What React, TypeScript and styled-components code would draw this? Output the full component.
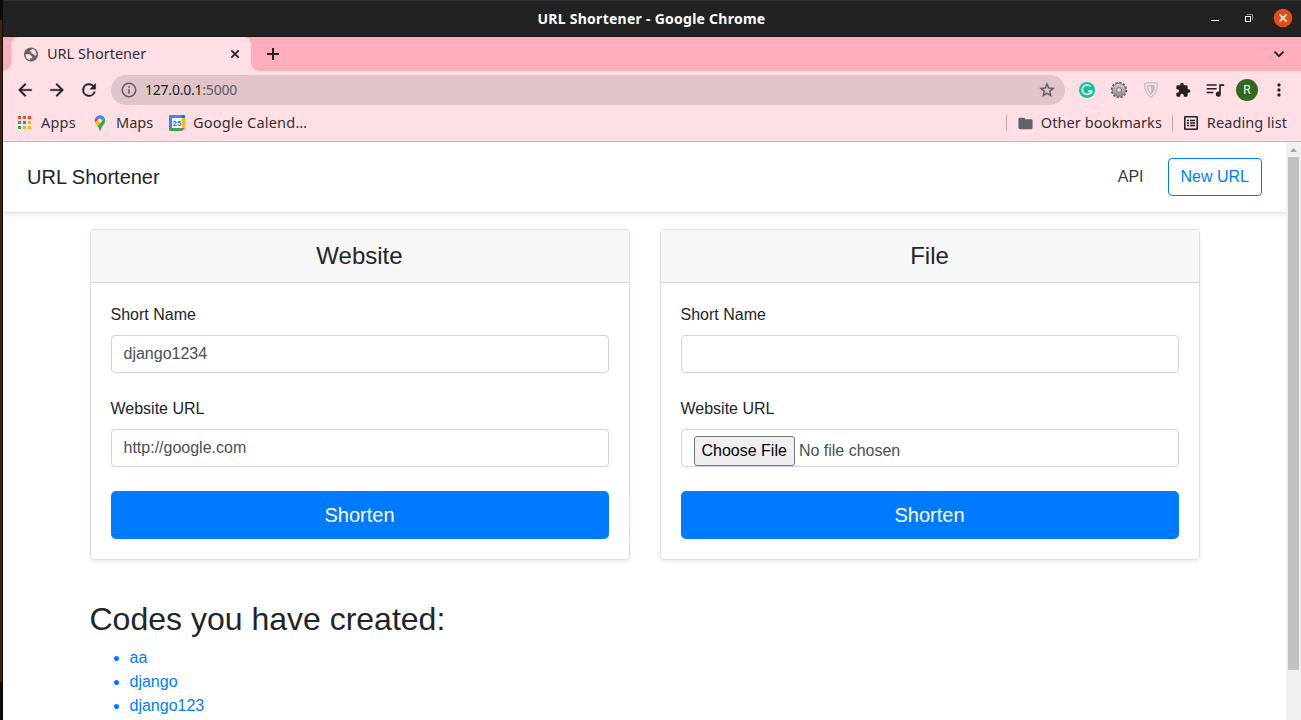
import React from 'react';
import styled, { createGlobalStyle } from 'styled-components';

const Global = createGlobalStyle`
  *, *::before, *::after { box-sizing: border-box; }
  html, body { margin: 0; padding: 0; overflow: hidden; }
  body { background: #fff; }
`;

const uiFont = `'Noto Sans', 'Open Sans', sans-serif`;
const pageFont = `'Liberation Sans', Arial, sans-serif`;

const Screen = styled.div`
  display: flex;
  width: 1301px;
  height: 720px;
  overflow: hidden;
  background: #fff;
`;
const DesktopEdge = styled.div`
  flex: none;
  width: 3px;
  height: 720px;
  border-right: 1px solid #050505;
  background: linear-gradient(#0c0c0c 0 20px, #4c2100 20px 682px, #0c0c0c 682px);
`;
const Window = styled.div`
  flex: 1;
  min-width: 0;
  display: flex;
  flex-direction: column;
`;

const UiText = styled.span<{ $size?: number; $track?: number; $bold?: boolean; $color?: string }>`
  font-family: ${uiFont};
  font-size: ${p => p.$size ?? 14.5}px;
  letter-spacing: ${p => p.$track ?? 0}px;
  font-weight: ${p => (p.$bold ? 700 : 400)};
  color: ${p => p.$color ?? '#313131'};
  line-height: 20px;
  white-space: nowrap;
`;

const TitleBar = styled.div`
  flex: none;
  display: grid;
  grid-template-columns: 1fr auto 1fr;
  align-items: center;
  height: 37px;
  padding: 0 6px 0 5px;
  background: #222;
  border-top: 1px solid #333;
  border-bottom: 1px solid #1a1a1a;
`;
const TitleCell = styled.div`
  grid-column: 2;
  display: flex;
`;
const WindowButtons = styled.div`
  display: flex;
  justify-content: flex-end;
  align-items: center;
  height: 21px;
  padding-bottom: 1px;
`;
const TabStrip = styled.div`
  flex: none;
  display: flex;
  align-items: stretch;
  height: 34px;
  background: #ffadbc;
`;
const TabCurve = styled.div<{ $side: 'left' | 'right' }>`
  align-self: flex-end;
  width: 8px;
  height: 8px;
  background: radial-gradient(circle at ${p => (p.$side === 'left' ? '0 0' : '100% 0')}, #ffadbc 7.5px, #ffdfe6 8px);
`;
const Tab = styled.div`
  display: flex;
  align-items: center;
  width: 240px;
  padding: 0 10px 0 12px;
  border-radius: 8px 8px 0 0;
  background: #ffdfe6;
`;
const TabTitle = styled.div`
  flex: 1;
  display: flex;
  padding: 0 0 2px 7px;
`;
const NewTab = styled.div`
  display: flex;
  flex: 1;
  align-items: center;
  padding-left: 5px;
`;
const TabSearch = styled.div`
  display: flex;
  align-items: center;
  padding-right: 15px;
`;
const Toolbar = styled.div`
  flex: none;
  display: flex;
  align-items: center;
  height: 38px;
  padding-left: 12px;
  background: #ffdfe6;
`;
const NavButtons = styled.div`
  flex: none;
  display: flex;
  gap: 12px;
  width: 96px;
`;
const Omnibox = styled.div`
  flex: none;
  display: flex;
  align-items: center;
  width: 954px;
  height: 30px;
  padding: 0 9px;
  border-radius: 15px;
  background: #e0c4ca;
`;
const Address = styled.div`
  flex: 1;
  display: flex;
  padding-left: 7px;
`;
const Extensions = styled.div`
  flex: none;
  display: grid;
  grid-template-columns: repeat(7, 32px);
  justify-items: center;
  align-items: center;
  padding-left: 6px;
`;
const Avatar = styled.div`
  display: grid;
  place-items: center;
  width: 22px;
  height: 22px;
  border-radius: 50%;
  background: #33691e;
  color: #fff;
  font: 12px/22px Roboto, sans-serif;
`;
const Bookmarks = styled.div`
  flex: none;
  display: flex;
  align-items: center;
  height: 33px;
  padding: 0 14px 4px 11px;
  background: #ffdfe6;
  border-bottom: 1px solid #ceb4ba;
`;
const Bookmark = styled.div<{ $width?: number; $gap?: number }>`
  display: flex;
  align-items: center;
  gap: ${p => p.$gap ?? 8}px;
  width: ${p => (p.$width ? `${p.$width}px` : 'auto')};
`;
const BookmarkLabel = styled(UiText)`
  padding-bottom: 2px;
`;
const Spacer = styled.div`
  flex: 1;
`;
const Divider = styled.div<{ $after: number }>`
  width: 1px;
  height: 16px;
  margin-right: ${p => p.$after}px;
  background: #c0a8ad;
`;

const Viewport = styled.div`
  flex: 1;
  min-height: 0;
  display: flex;
  overflow: hidden;
`;
const Page = styled.div`
  flex: 1;
  height: 578px;
  overflow: hidden;
  background: #fff;
  color: #212529;
  font-family: ${pageFont};
  font-size: 16px;
  line-height: 24px;
`;
const ScrollTrack = styled.div`
  flex: none;
  display: flex;
  flex-direction: column;
  align-items: center;
  width: 15px;
  height: 578px;
  background: #f0f0f0;
`;
const ScrollThumb = styled.div`
  width: 11px;
  height: 513px;
  background: #c1c1c1;
`;
const NavBar = styled.header`
  display: flex;
  align-items: center;
  height: 71px;
  padding: 16px 24px;
  border-bottom: 1px solid #dee2e6;
  box-shadow: 0 2px 4px rgba(0, 0, 0, 0.075);
`;
const Brand = styled.h5`
  margin: 0 auto 0 0;
  font-size: 20px;
  font-weight: 400;
  line-height: 24px;
`;
const NavLink = styled.a`
  margin-right: 16px;
  padding: 8px;
  color: #343a40;
`;
const OutlineButton = styled.a`
  padding: 6px 12px;
  border: 1px solid #007bff;
  border-radius: 4px;
  color: #007bff;
`;
const Container = styled.main`
  width: 1140px;
  margin: 0 auto;
  padding: 16px 15px 0;
`;
const CardDeck = styled.div`
  display: flex;
  gap: 30px;
`;
const Card = styled.section`
  flex: 1;
  border: 1px solid #dfdfdf;
  border-radius: 4px;
  box-shadow: 0 2px 4px rgba(0, 0, 0, 0.075);
`;
const CardHeader = styled.div`
  padding: 12px 20px;
  border-bottom: 1px solid #d8d8d8;
  border-radius: 3px 3px 0 0;
  background: #f7f7f7;
  text-align: center;
`;
const CardTitle = styled.h4`
  margin: 0;
  font-size: 24px;
  font-weight: 400;
  line-height: 28px;
`;
const CardBody = styled.div`
  padding: 20px;
`;
const Field = styled.div`
  margin-bottom: 24px;
`;
const Label = styled.label`
  display: block;
  margin-bottom: 8px;
`;
const Input = styled.input`
  display: block;
  width: 100%;
  height: 38px;
  padding: 6px 12px;
  border: 1px solid #ced4da;
  border-radius: 4px;
  background: #fff;
  color: #495057;
  font: 16px/24px ${pageFont};
`;
const FileInput = styled.div`
  display: flex;
  align-items: flex-start;
  gap: 4px;
  height: 38px;
  padding: 6px 12px 0;
  border: 1px solid #ced4da;
  border-radius: 4px;
  color: #495057;
  line-height: 30px;
`;
const FileButton = styled.span`
  height: 30px;
  padding: 0 7px;
  border: 1px solid #767676;
  border-radius: 3px;
  background: #efefef;
  color: #000;
  line-height: 28px;
`;
const Submit = styled.button`
  display: block;
  width: 100%;
  height: 48px;
  padding: 0;
  border: 0;
  border-radius: 5px;
  background: #007bff;
  color: #fff;
  font: 20px/30px ${pageFont};
`;
const SectionTitle = styled.h2`
  margin: 40px 0 8px;
  font-size: 32px;
  font-weight: 400;
  line-height: 38px;
`;
const CodeList = styled.ul`
  margin: 0;
  padding-left: 40px;
  color: #007bff;
`;

const Icon = ({ d, size = 20, color = '#202124', weight = 0 }: { d: string; size?: number; color?: string; weight?: number }) => (
  <svg width={size} height={size} viewBox="0 0 24 24" fill={color} stroke={color} strokeWidth={weight}><path d={d} /></svg>
);

const icons = {
  back: 'M20 11H7.83l5.59-5.59L12 4l-8 8 8 8 1.41-1.41L7.83 13H20z',
  forward: 'M12 4l-1.41 1.41L16.17 11H4v2h12.17l-5.58 5.59L12 20l8-8z',
  reload: 'M17.65 6.35A7.96 7.96 0 0 0 12 4a8 8 0 1 0 7.73 10h-2.08A6 6 0 1 1 12 6c1.66 0 3.14.69 4.22 1.78L13 11h7V4z',
  info: 'M11 7h2v2h-2zm0 4h2v6h-2zm1-9a10 10 0 1 0 0 20 10 10 0 0 0 0-20zm0 18a8 8 0 1 1 0-16 8 8 0 0 1 0 16z',
  star: 'M22 9.24l-7.19-.62L12 2 9.19 8.63 2 9.24l5.46 4.73L5.82 21 12 17.27 18.18 21l-1.63-7.03zM12 15.4l-3.76 2.27 1-4.28-3.32-2.88 4.38-.38L12 6.1l1.71 4.04 4.38.38-3.32 2.88 1 4.28z',
  puzzle: 'M20.5 11H19V7a2 2 0 0 0-2-2h-4V3.5a2.5 2.5 0 0 0-5 0V5H4a2 2 0 0 0-2 2v3.8h1.5a2.7 2.7 0 0 1 0 5.4H2V20a2 2 0 0 0 2 2h3.8v-1.5a2.7 2.7 0 0 1 5.4 0V22H17a2 2 0 0 0 2-2v-4h1.5a2.5 2.5 0 0 0 0-5z',
  queue: 'M2 5h12v2H2zm0 4.5h12v2H2zm0 4.5h8v2H2zM17 5h6v2.2h-4V17a3 3 0 1 1-2-2.83z',
  dots: 'M12 8a2 2 0 1 0 0-4 2 2 0 0 0 0 4zm0 2a2 2 0 1 0 0 4 2 2 0 0 0 0-4zm0 6a2 2 0 1 0 0 4 2 2 0 0 0 0-4z',
  folder: 'M10 4H4a2 2 0 0 0-2 2v12a2 2 0 0 0 2 2h16a2 2 0 0 0 2-2V8a2 2 0 0 0-2-2h-8z',
};

const WindowControls = () => (
  <svg width="92" height="20" viewBox="0 0 92 20" fill="none">
    <path d="M8 12.5h8" stroke="#fff" />
    <path d="M44 6.5h5.5v5.5" stroke="#8b8b8b" />
    <rect x="42.5" y="8.5" width="5" height="5" stroke="#fff" />
    <circle cx="80" cy="10" r="9.3" fill="#e24e1b" />
    <path d="M76.5 6.5l7 7m0-7l-7 7" stroke="#fff" strokeWidth="1.6" />
  </svg>
);

const GlobeIcon = () => (
  <svg width="17" height="17" viewBox="0 0 17 17">
    <circle cx="8" cy="8.5" r="7" fill="#5f6368" />
    <path d="M2.5 8.2h3.8c1.7 0 1.5 2.3 3 2.3v1.8H7.1v1.9C4.2 13.8 2.4 11.4 2.5 8.2z" fill="#ffdfe6" />
    <path d="M9.2 2.8c2.7.6 4.5 3 4.3 5.9-1 1.5-2.2.9-2.5 0-.5-1.2-2.7-.5-2.7-2V5.5h-1.8c0-1.5 1.9-1 2.7-2.7z" fill="#ffdfe6" />
  </svg>
);

const AppsIcon = () => (
  <svg width="20" height="20" viewBox="0 0 20 20">
    {['#f44336', '#f44336', '#f44336', '#34a853', '#1e88e5', '#fbb905', '#34a853', '#fbb905', '#fbb905'].map((c, i) => (
      <rect key={i} x={4 + (i % 3) * 5} y={3 + Math.floor(i / 3) * 5} width="3" height="3" fill={c} />
    ))}
  </svg>
);

const MapsIcon = () => (
  <svg width="16" height="16" viewBox="0 0 16 16">
    <path d="M3.9 2.2A5.2 5.2 0 0 0 3.2 7.7L6.5 5z" fill="#ea4335" />
    <path d="M3.7 2.4A5.3 5.3 0 0 1 12.6 2.9L9.3 6.6 6.5 5z" fill="#4285f4" />
    <path d="M12.6 2.9c1.4 2.8.3 5.2-1.3 7.2C10 11.7 9.4 13 8.8 15c-.2.7-1.2.7-1.4 0-.5-1.7-1-2.9-1.8-4z" fill="#34a853" />
    <path d="M3.2 7.7C3.7 8.9 4.7 10 5.7 11.2L9.6 6.5 6.4 4.2z" fill="#fbbc04" />
    <circle cx="8" cy="5.4" r="2" fill="#ffdfe6" />
  </svg>
);

const CalendarIcon = () => (
  <svg width="16" height="16" viewBox="0 0 16 16">
    <path d="M0 1a1 1 0 0 1 1-1h12v3H3v10H0z" fill="#4285f4" />
    <path d="M13 0h2a1 1 0 0 1 1 1v2h-3z" fill="#1967d2" />
    <path d="M13 3h3v10h-3z" fill="#fbbc04" />
    <path d="M0 13h13v3H1a1 1 0 0 1-1-1z" fill="#34a853" />
    <path d="M13 13h3l-3 3z" fill="#ea4335" />
    <path d="M3 3h10v10H3z" fill="#fff" />
    <text x="8" y="11" textAnchor="middle" fontFamily="Roboto, sans-serif" fontWeight="700" fontSize="8" fill="#1a73e8">25</text>
  </svg>
);

const GrammarlyIcon = () => (
  <svg width="20" height="20" viewBox="0 0 20 20" fill="none">
    <circle cx="10" cy="10" r="8" fill="#15c39a" />
    <path d="M13.5 6.6A4.7 4.7 0 1 0 14.5 11H11.3M14.4 10.4v3.4" stroke="#fff" strokeWidth="1.5" />
  </svg>
);

const GearIcon = () => (
  <svg width="20" height="20" viewBox="0 0 20 20" fill="none">
    <defs>
      <linearGradient id="steel" x1="0" y1="0" x2="0" y2="1">
        <stop offset="0" stopColor="#d4d0d0" />
        <stop offset="1" stopColor="#8a8787" />
      </linearGradient>
    </defs>
    <circle cx="10" cy="10" r="7.1" stroke="#5a5858" strokeWidth="2.2" strokeDasharray="2.2 1.517" />
    <circle cx="10" cy="10" r="6.6" fill="url(#steel)" stroke="#777" strokeWidth=".7" />
    <circle cx="10" cy="10" r="2.4" fill="#f2dce0" stroke="#8b8787" strokeWidth="1.2" />
  </svg>
);

const ShieldIcon = () => (
  <svg width="20" height="20" viewBox="0 0 20 20" fill="none">
    <path d="M3.5 3.5Q10 1.5 16.5 3.5C16.5 10.5 14.5 14.5 10 17.3 5.5 14.5 3.5 10.5 3.5 3.5z" stroke="#c8c0c2" strokeWidth="1.3" fill="#f4e2e5" />
    <path d="M6.5 6Q10 5 13.5 6C13.3 9.5 12.3 12 10 14 7.7 12 6.7 9.5 6.5 6z" stroke="#c3bbbd" strokeWidth="1.3" />
    <path d="M10 5.5c1.5 0 2.5.2 3.5.5-.2 3.5-1.2 6-3.5 8z" fill="#c3bbbd" />
  </svg>
);

const ReadingIcon = () => (
  <svg width="20" height="20" viewBox="0 0 20 20" fill="none">
    <rect x="3.8" y="3.8" width="12.4" height="12.4" rx=".5" stroke="#202124" strokeWidth="1.6" />
    <path d="M6 7.5h2m1 0h5M6 10h2m1 0h5M6 12.5h2m1 0h5" stroke="#202124" strokeWidth="1.3" />
  </svg>
);

export default function App() {
  return (
    <>
      <Global />
      <Screen>
        <DesktopEdge />
        <Window>
          <TitleBar>
            <TitleCell><UiText $bold $size={14} $track={0.26} $color="#fff">URL Shortener - Google Chrome</UiText></TitleCell>
            <WindowButtons><WindowControls /></WindowButtons>
          </TitleBar>
          <TabStrip>
            <TabCurve $side="left" />
            <Tab>
              <GlobeIcon />
              <TabTitle><UiText>URL Shortener</UiText></TabTitle>
              <svg width="12" height="12" viewBox="0 0 12 12" stroke="#202124" strokeWidth="1.7"><path d="M2.3 2.3l7.4 7.4m0-7.4l-7.4 7.4" /></svg>
            </Tab>
            <TabCurve $side="right" />
            <NewTab>
              <svg width="18" height="18" viewBox="0 0 18 18" stroke="#202124" strokeWidth="2"><path d="M3 9h12M9 3v12" /></svg>
            </NewTab>
            <TabSearch>
              <svg width="14" height="14" viewBox="0 0 14 14" fill="none" stroke="#202124" strokeWidth="1.8"><path d="M2.5 4.7L7 9.2l4.5-4.5" /></svg>
            </TabSearch>
          </TabStrip>
          <Toolbar>
            <NavButtons>
              <Icon d={icons.back} weight={0.4} />
              <Icon d={icons.forward} weight={0.4} />
              <Icon d={icons.reload} weight={0.4} />
            </NavButtons>
            <Omnibox>
              <Icon d={icons.info} size={18} color="#5f5a5e" />
              <Address>
                <UiText $size={14} $track={-0.22} $color="#202124">127.0.0.1</UiText>
                <UiText $size={14} $track={-0.22} $color="#66595e">:5000</UiText>
              </Address>
              <Icon d={icons.star} size={18} color="#5f5a5e" weight={0.4} />
            </Omnibox>
            <Extensions>
              <GrammarlyIcon />
              <GearIcon />
              <ShieldIcon />
              <Icon d={icons.puzzle} size={16} />
              <Icon d={icons.queue} />
              <Avatar>R</Avatar>
              <Icon d={icons.dots} />
            </Extensions>
          </Toolbar>
          <Bookmarks>
            <Bookmark $width={78} $gap={7}><AppsIcon /><BookmarkLabel $track={0.2}>Apps</BookmarkLabel></Bookmark>
            <Bookmark $width={77}><MapsIcon /><BookmarkLabel>Maps</BookmarkLabel></Bookmark>
            <Bookmark><CalendarIcon /><BookmarkLabel $track={0.2}>Google Calend…</BookmarkLabel></Bookmark>
            <Spacer />
            <Divider $after={10} />
            <Bookmark $width={155} $gap={7}><Icon d={icons.folder} size={17} color="#5f6368" /><BookmarkLabel $track={0.07}>Other bookmarks</BookmarkLabel></Bookmark>
            <Divider $after={8} />
            <Bookmark $gap={6}><ReadingIcon /><BookmarkLabel $track={0.07}>Reading list</BookmarkLabel></Bookmark>
          </Bookmarks>
          <Viewport>
            <Page>
              <NavBar>
                <Brand>URL Shortener</Brand>
                <NavLink>API</NavLink>
                <OutlineButton>New URL</OutlineButton>
              </NavBar>
              <Container>
                <CardDeck>
                  <Card>
                    <CardHeader><CardTitle>Website</CardTitle></CardHeader>
                    <CardBody>
                      <Field><Label>Short Name</Label><Input defaultValue="django1234" /></Field>
                      <Field><Label>Website URL</Label><Input defaultValue="http://google.com" /></Field>
                      <Submit>Shorten</Submit>
                    </CardBody>
                  </Card>
                  <Card>
                    <CardHeader><CardTitle>File</CardTitle></CardHeader>
                    <CardBody>
                      <Field><Label>Short Name</Label><Input /></Field>
                      <Field>
                        <Label>Website URL</Label>
                        <FileInput><FileButton>Choose File</FileButton>No file chosen</FileInput>
                      </Field>
                      <Submit>Shorten</Submit>
                    </CardBody>
                  </Card>
                </CardDeck>
                <SectionTitle>Codes you have created:</SectionTitle>
                <CodeList>
                  <li>aa</li>
                  <li>django</li>
                  <li>django123</li>
                </CodeList>
              </Container>
            </Page>
            <ScrollTrack>
              <svg width="15" height="15" viewBox="0 0 15 15"><path d="M4 10l3.5-4L11 10z" fill="#a3a3a3" /></svg>
              <ScrollThumb />
            </ScrollTrack>
          </Viewport>
        </Window>
      </Screen>
    </>
  );
}
